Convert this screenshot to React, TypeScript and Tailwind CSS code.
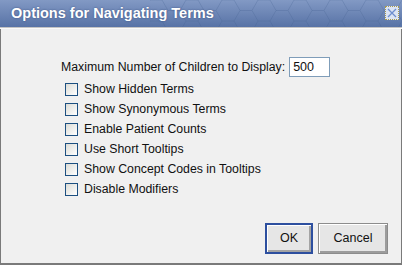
import React from "react";

const options = [
  "Show Hidden Terms",
  "Show Synonymous Terms",
  "Enable Patient Counts",
  "Use Short Tooltips",
  "Show Concept Codes in Tooltips",
  "Disable Modifiers",
];

export default function App() {
  return (
    <div
      className="w-[402px] h-[265px] flex flex-col bg-[#f0f0f0] text-[#111]"
      style={{ fontFamily: '"Liberation Sans", Arial, sans-serif' }}
    >
      {/* title bar */}
      <div className="relative h-[27px] shrink-0 overflow-hidden bg-gradient-to-b from-[#8299c4] to-[#5873a6] flex items-center pl-[11px]">
        <svg className="absolute inset-0" width="402" height="27">
          <defs>
            <pattern id="hex" width="36" height="21" patternUnits="userSpaceOnUse">
              <path d="M0 10.5 L6 0 H18 L24 10.5 L18 21 H6 Z M24 10.5 H36" fill="none" stroke="#3f5a8c" strokeOpacity="0.25" strokeWidth="1" />
            </pattern>
          </defs>
          <rect x="150" y="0" width="252" height="27" fill="url(#hex)" />
        </svg>
        <span className="relative text-white font-bold text-[14.5px] [text-shadow:0_0_2px_#3a5080]">
          Options for Navigating Terms
        </span>
        <button className="absolute right-[3px] top-[6px] w-[14px] h-[14px] border border-dotted border-[#a89a50] bg-[#dbe4f5] flex items-center justify-center">
          <svg width="10" height="10" viewBox="0 0 10 10">
            <path d="M1 1 L9 9 M9 1 L1 9" stroke="#6d8ed0" strokeWidth="1.3" />
          </svg>
        </button>
      </div>
      <div className="h-[2px] shrink-0 bg-[#c4c4c4] border-b border-[#fafafa]" />

      {/* body */}
      <div className="flex-1 flex flex-col border-x border-b-2 border-[#7a7a7a] text-[12.3px]">
        <div className="pt-[28px] pl-[60px] flex flex-col">
          <div className="flex items-center h-[20px] gap-[4px]">
            <span>Maximum Number of Children to Display:</span>
            <div className="w-[41px] h-[20px] border border-[#7f9db9] bg-white flex items-center pl-[3px] text-[12.5px]">
              500
            </div>
          </div>
          <div className="mt-[2px] pl-[4px] flex flex-col">
            {options.map((o) => (
              <label key={o} className="flex items-center h-[20px] gap-[6px]">
                <span className="w-[13px] h-[13px] border border-[#1c4f80] bg-gradient-to-br from-[#dcdcd6] to-white" />
                <span>{o}</span>
              </label>
            ))}
          </div>
        </div>

        <div className="mt-auto mb-[9px] pr-[13px] flex justify-end gap-[5px]">
          <button className="w-[48px] h-[31px] border-2 border-[#2d4f9f] bg-[#e6e6e6] shadow-[inset_1px_1px_0_#ffffff,inset_-2px_-2px_0_#a4a4a4] text-[12.5px]">
            OK
          </button>
          <button className="w-[70px] h-[31px] border border-[#8c8c8c] bg-[#e6e6e6] shadow-[inset_1px_1px_0_#ffffff,inset_-2px_-2px_0_#9c9c9c] text-[12.5px]">
            Cancel
          </button>
        </div>
      </div>
    </div>
  );
}
